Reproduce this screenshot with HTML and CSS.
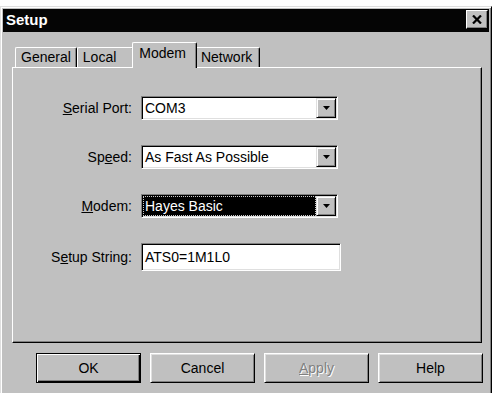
FILE: index.html
```html
<!DOCTYPE html>
<html lang="en">

<head>
    <meta charset="UTF-8">
    <meta name="viewport" content="width=device-width, initial-scale=1.0">
    <title>Setup</title>
    <link rel="stylesheet" href="styles.css">
</head>

<body>
    <div class="window">
        <div class="titlebar">
            <span class="title">Setup</span>
            <button class="close-btn" aria-label="Close">
                <svg width="10" height="9" viewBox="0 0 10 9">
                    <path d="M1 0.5 L9 8.5 M9 0.5 L1 8.5" stroke="#000" stroke-width="2.2" fill="none" />
                </svg>
            </button>
        </div>

        <div class="content">
            <div class="tabs">
                <div class="tab">General</div>
                <div class="tab tab-local">Local</div>
                <div class="tab active">Modem</div>
                <div class="tab tab-network">Network</div>
            </div>

            <div class="panel">
                <div class="form">
                    <label class="field-label"><u>S</u>erial Port:</label>
                    <div class="combo">
                        <span class="combo-text">COM3</span>
                        <span class="combo-btn">
                            <svg width="7" height="4" viewBox="0 0 7 4"><path d="M0 0 H7 L3.5 4 Z" fill="#000" /></svg>
                        </span>
                    </div>

                    <label class="field-label">Sp<u>e</u>ed:</label>
                    <div class="combo">
                        <span class="combo-text">As Fast As Possible</span>
                        <span class="combo-btn">
                            <svg width="7" height="4" viewBox="0 0 7 4"><path d="M0 0 H7 L3.5 4 Z" fill="#000" /></svg>
                        </span>
                    </div>

                    <label class="field-label"><u>M</u>odem:</label>
                    <div class="combo">
                        <span class="combo-text selected">Hayes Basic</span>
                        <span class="combo-btn">
                            <svg width="7" height="4" viewBox="0 0 7 4"><path d="M0 0 H7 L3.5 4 Z" fill="#000" /></svg>
                        </span>
                    </div>

                    <label class="field-label">S<u>e</u>tup String:</label>
                    <div class="text-input">ATS0=1M1L0</div>
                </div>
            </div>

            <div class="buttons">
                <button class="btn default">OK</button>
                <button class="btn">Cancel</button>
                <button class="btn disabled"><u>A</u>pply</button>
                <button class="btn">Help</button>
            </div>
        </div>
    </div>
</body>

</html>
```

FILE: styles.css
```css
body {
    margin: 0;
    background: #ffffff;
    font-family: "Liberation Sans", Arial, sans-serif;
    font-size: 14px;
    color: #000000;
    overflow: hidden;
}

.window {
    margin-top: 6px;
    width: 492px;
    height: 400px;
    box-sizing: border-box;
    padding: 2px;
    background: #c0c0c0;
    border: 1px solid;
    border-color: #dfdfdf #000000 #000000 #dfdfdf;
    box-shadow: inset 1px 1px #ffffff, inset -1px -1px #808080;
}

.titlebar {
    height: 23px;
    display: flex;
    justify-content: space-between;
    align-items: flex-start;
    padding: 0 1px 0 3px;
    background: #050505;
}

.title {
    color: #ffffff;
    font-weight: bold;
    font-size: 15px;
    line-height: 22px;
}

.close-btn {
    margin-top: 1px;
    width: 22px;
    height: 19px;
    padding: 0;
    display: flex;
    align-items: center;
    justify-content: center;
    background: #c0c0c0;
    border: 1px solid;
    border-color: #ffffff #000000 #000000 #ffffff;
    box-shadow: inset -1px -1px #808080;
}

.content {
    padding: 10px 6px 0 9px;
}

.tabs {
    display: flex;
    align-items: flex-end;
    height: 25px;
    padding-left: 3px;
}

.tab {
    height: 20px;
    box-sizing: border-box;
    padding: 0 5px;
    line-height: 18px;
    border-top: 1px solid #ffffff;
    border-left: 1px solid #ffffff;
    border-right: 1px solid #000000;
    border-radius: 2px 2px 0 0;
    box-shadow: inset -1px 0 #808080;
}

.tab-local {
    padding-right: 17px;
}

.tab-network {
    padding-right: 7px;
}

.tab.active {
    position: relative;
    z-index: 1;
    height: 26px;
    margin: 0 -2px -1px;
    padding: 0 10px 0 6px;
    line-height: 20px;
    background: #c0c0c0;
}

.panel {
    width: 470px;
    height: 276px;
    box-sizing: border-box;
    border: 1px solid;
    border-color: #ffffff #000000 #000000 #ffffff;
    box-shadow: inset -1px -1px #808080;
}

.form {
    display: grid;
    grid-template-columns: 119px auto;
    column-gap: 9px;
    row-gap: 25px;
    align-items: center;
    justify-items: start;
    padding-top: 28px;
}

.field-label {
    justify-self: end;
}

.combo {
    width: 197px;
    height: 24px;
    box-sizing: border-box;
    display: flex;
    padding: 1px;
    background: #ffffff;
    border: 1px solid;
    border-color: #808080 #ffffff #ffffff #808080;
    box-shadow: inset 1px 1px #000000, inset -1px -1px #dfdfdf;
}

.combo-text {
    flex: 1;
    padding-left: 2px;
    line-height: 20px;
    white-space: nowrap;
}

.combo-text.selected {
    background: #000000;
    color: #ffffff;
    outline: 1px dotted #c8c8c8;
    outline-offset: -1px;
}

.combo-btn {
    width: 20px;
    height: 20px;
    box-sizing: border-box;
    display: flex;
    align-items: center;
    justify-content: center;
    background: #c0c0c0;
    border: 1px solid;
    border-color: #dfdfdf #000000 #000000 #dfdfdf;
    box-shadow: inset 1px 1px #ffffff, inset -1px -1px #808080;
}

.text-input {
    width: 200px;
    height: 28px;
    box-sizing: border-box;
    padding: 1px 0 0 3px;
    line-height: 24px;
    background: #ffffff;
    border: 1px solid;
    border-color: #808080 #ffffff #ffffff #808080;
    box-shadow: inset 1px 1px #000000, inset -1px -1px #dfdfdf;
}

.buttons {
    display: flex;
    justify-content: flex-end;
    gap: 9px;
    margin-top: 10px;
}

.btn {
    width: 105px;
    height: 30px;
    padding: 0;
    font-family: "Liberation Sans", Arial, sans-serif;
    font-size: 14px;
    color: #000000;
    background: #c0c0c0;
    border: 1px solid;
    border-color: #ffffff #000000 #000000 #ffffff;
    box-shadow: inset 1px 1px #dfdfdf, inset -1px -1px #808080;
}

.btn.default {
    border-color: #000000;
    box-shadow: inset 1px 1px #ffffff, inset -1px -1px #000000, inset -2px -2px #808080;
}

.btn.disabled {
    color: #808080;
    text-shadow: 1px 1px #ffffff;
}
```
